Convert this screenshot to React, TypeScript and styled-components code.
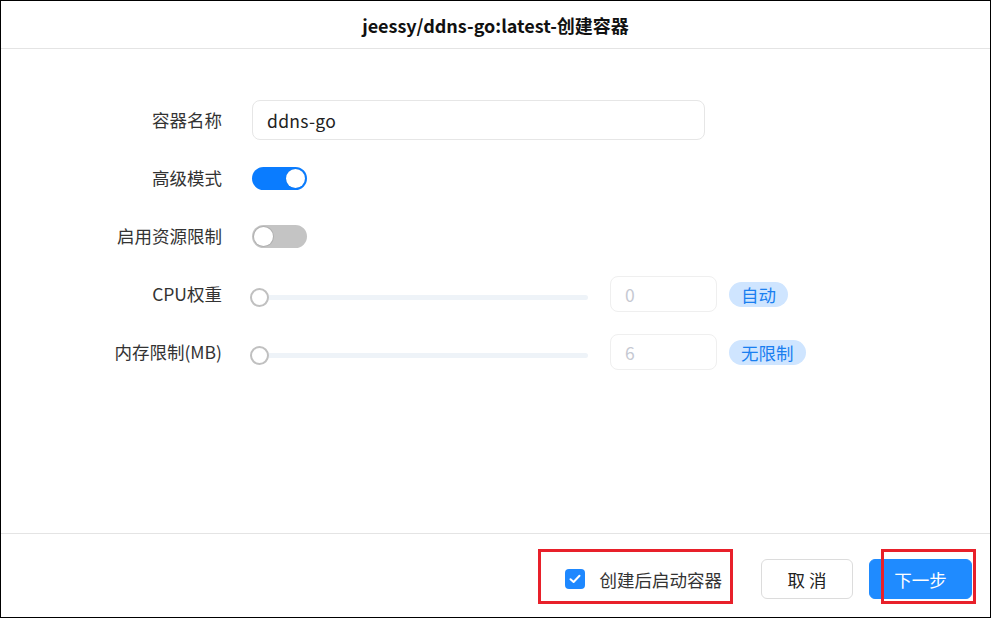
import React from "react";
import styled, { createGlobalStyle } from "styled-components";

const GlobalStyle = createGlobalStyle`
  html, body { margin: 0; padding: 0; background: #fff; }
  body { font-family: "Noto Sans CJK SC", "Noto Sans", sans-serif; color: #222; }
  * { box-sizing: border-box; }
`;

const Frame = styled.div`
  position: relative;
  width: 991px;
  height: 618px;
  border: 1px solid #000;
  background: #fff;
  display: flex;
  flex-direction: column;
`;

const Header = styled.div`
  height: 48px;
  border-bottom: 1px solid #e4e4e4;
  display: flex;
  align-items: center;
  justify-content: center;
`;

const Title = styled.h1`
  margin: 0;
  font-size: 18px;
  font-weight: 700;
  line-height: 24px;
  color: #111;
`;

const Body = styled.div`
  flex: 1;
  padding-top: 42px;
  display: grid;
  grid-template-columns: 221px 1fr;
  grid-auto-rows: 58px;
  column-gap: 30px;
  align-content: start;
  align-items: center;
`;

const Label = styled.div`
  text-align: right;
  font-size: 17.5px;
  line-height: 24px;
  color: #333;
`;

const Cell = styled.div`
  display: flex;
  align-items: center;
`;

const TextInput = styled.input`
  width: 453px;
  height: 40px;
  border: 1px solid #e6e6e6;
  border-radius: 8px;
  padding: 0 0 0 14px;
  font-family: inherit;
  font-size: 17.5px;
  letter-spacing: 0.3px;
  color: #222;
  outline: none;
  background: #fff;
`;

const Toggle = styled.div<{ $on: boolean }>`
  width: 55px;
  height: 23px;
  border-radius: 12px;
  padding: 2px;
  display: flex;
  justify-content: ${(p) => (p.$on ? "flex-end" : "flex-start")};
  background: ${(p) => (p.$on ? "#0a7cff" : "#c4c4c4")};
`;

const Knob = styled.div<{ $on: boolean }>`
  width: 19px;
  height: 19px;
  border-radius: 50%;
  background: #fff;
  box-shadow: ${(p) => (p.$on ? "0 0 1px rgba(0,0,0,0.2)" : "0 0 0 1px #b0b0b0")};
`;

const Slider = styled.div`
  position: relative;
  width: 338px;
  height: 19px;
  margin-left: -2px;
  margin-top: 7px;
  display: flex;
  align-items: center;
`;

const Track = styled.div`
  width: 100%;
  height: 5px;
  border-radius: 3px;
  background: #eef3f8;
`;

const Thumb = styled.div`
  position: absolute;
  left: 0;
  top: 0;
  width: 19px;
  height: 19px;
  border-radius: 50%;
  border: 2px solid #c0c0c0;
  background: #fff;
`;

const NumberBox = styled.input`
  margin-left: 22px;
  width: 107px;
  height: 36px;
  border: 1px solid #efefef;
  border-radius: 8px;
  padding: 0 0 0 14px;
  font-family: inherit;
  font-size: 17.5px;
  color: #c6c9d2;
  outline: none;
  background: #fff;
`;

const Tag = styled.span`
  margin-left: 12px;
  height: 25px;
  padding: 0 12px;
  border-radius: 13px;
  background: #cfe5ff;
  color: #1a7ff0;
  font-size: 17.5px;
  line-height: 25px;
`;

const Footer = styled.div`
  height: 84px;
  border-top: 1px solid #e4e4e4;
  display: flex;
  justify-content: flex-end;
  align-items: flex-start;
  padding: 25px 18px 0 0;
`;

const CheckGroup = styled.label`
  height: 40px;
  display: flex;
  align-items: center;
  gap: 15px;
  margin-right: 39px;
  font-size: 17.5px;
  color: #333;
`;

const CheckBox = styled.span`
  width: 20px;
  height: 20px;
  border-radius: 4px;
  background: #1e88ff;
  display: flex;
  align-items: center;
  justify-content: center;
`;

const Button = styled.button<{ $primary?: boolean }>`
  height: 40px;
  width: ${(p) => (p.$primary ? "103px" : "92px")};
  margin-left: ${(p) => (p.$primary ? "16px" : "0")};
  border-radius: 6px;
  border: 1px solid ${(p) => (p.$primary ? "#1f8bff" : "#dcdcdc")};
  background: ${(p) => (p.$primary ? "#1f8bff" : "#fff")};
  color: ${(p) => (p.$primary ? "#fff" : "#222")};
  font-family: inherit;
  font-size: 17.5px;
  cursor: pointer;
`;

const Mark = styled.div<{ $left: number; $width: number }>`
  position: absolute;
  top: 548px;
  left: ${(p) => p.$left}px;
  width: ${(p) => p.$width}px;
  height: 55px;
  border: 3px solid #e8202a;
  pointer-events: none;
`;

export default function App() {
  return (
    <>
      <GlobalStyle />
      <Frame>
        <Header>
          <Title>jeessy/ddns-go:latest-创建容器</Title>
        </Header>
        <Body>
          <Label>容器名称</Label>
          <Cell>
            <TextInput defaultValue="ddns-go" />
          </Cell>

          <Label>高级模式</Label>
          <Cell>
            <Toggle $on>
              <Knob $on />
            </Toggle>
          </Cell>

          <Label>启用资源限制</Label>
          <Cell>
            <Toggle $on={false}>
              <Knob $on={false} />
            </Toggle>
          </Cell>

          <Label>CPU权重</Label>
          <Cell>
            <Slider>
              <Track />
              <Thumb />
            </Slider>
            <NumberBox defaultValue="0" />
            <Tag>自动</Tag>
          </Cell>

          <Label>内存限制(MB)</Label>
          <Cell>
            <Slider>
              <Track />
              <Thumb />
            </Slider>
            <NumberBox defaultValue="6" />
            <Tag>无限制</Tag>
          </Cell>
        </Body>
        <Footer>
          <CheckGroup>
            <CheckBox>
              <svg width="12" height="10" viewBox="0 0 12 10" fill="none">
                <path d="M1.5 5.2 L4.6 8 L10.5 1.8" stroke="#fff" strokeWidth="2" strokeLinecap="round" strokeLinejoin="round" />
              </svg>
            </CheckBox>
            创建后启动容器
          </CheckGroup>
          <Button>取 消</Button>
          <Button $primary>下一步</Button>
        </Footer>
        <Mark $left={537} $width={195} />
        <Mark $left={880} $width={95} />
      </Frame>
    </>
  );
}
